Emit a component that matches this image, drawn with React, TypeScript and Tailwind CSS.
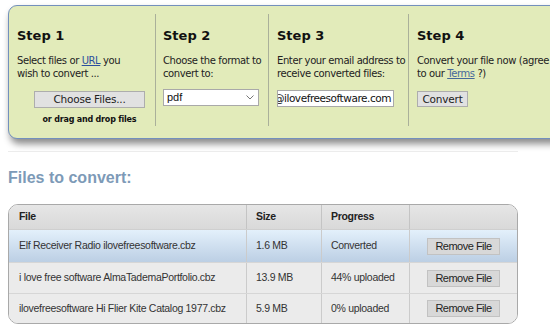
import React from 'react';

const panelFont = { fontFamily: '"DejaVu Sans", Verdana, sans-serif' };
const tableFont = { fontFamily: '"Liberation Sans", Arial, sans-serif' };

const rows = [
    { name: 'Elf Receiver Radio ilovefreesoftware.cbz', size: '1.6 MB', progress: 'Converted', active: true, h: 'h-[32px]' },
    { name: 'i love free software AlmaTademaPortfolio.cbz', size: '13.9 MB', progress: '44% uploaded', active: false, h: 'h-[31px]' },
    { name: 'ilovefreesoftware Hi Flier Kite Catalog 1977.cbz', size: '5.9 MB', progress: '0% uploaded', active: false, h: 'h-[30px]' },
];

const Heading: React.FC<{ children: React.ReactNode }> = ({ children }) => (
    <h3 className="text-[13px] leading-[16px] tracking-normal font-bold text-[#111]">{children}</h3>
);

export default function App() {
    return (
        <div className="w-[550px] h-[326px] overflow-hidden bg-white relative">
            {/* Steps panel */}
            <div
                className="ml-[8px] mt-[5px] w-[570px] h-[134px] rounded-[9px] border-[1.5px] border-[#7390bd] bg-[#e2ebba] shadow-[2px_5px_7px_rgba(0,0,0,0.45)] pl-[1px] pt-[8px]"
                style={panelFont}
            >
                <div className="flex h-[112px] text-[10px] leading-[13px] tracking-[-0.4px] text-[#222]">
                    {/* Step 1 */}
                    <div className="w-[145px] pl-[7px] pt-[14px] flex flex-col">
                        <Heading>Step 1</Heading>
                        <p className="mt-[10px] whitespace-nowrap">
                            Select files or <span className="text-[#2c4f9e] underline">URL</span> you
                            <br />wish to convert ...
                        </p>
                        <div className="ml-[17px] w-[111px] flex flex-col items-center">
                            <button className="mt-[11px] w-[111px] h-[17px] bg-[#e1e1e1] border border-[#adadad] text-[10.5px] leading-[15px] tracking-[-0.2px] text-[#222]">
                                Choose Files...
                            </button>
                            <div className="mt-[7px] text-[8px] leading-[10px] tracking-[-0.2px] font-bold text-[#111] whitespace-nowrap">or drag and drop files</div>
                        </div>
                    </div>
                    {/* Step 2 */}
                    <div className="w-[113px] border-l border-[#aab09a] pl-[7px] pt-[14px] flex flex-col">
                        <Heading>Step 2</Heading>
                        <p className="mt-[10px] whitespace-nowrap">
                            Choose the format to
                            <br />convert to:
                        </p>
                        <div className="mt-[9px] w-[96px] h-[17px] bg-white border border-[#a9a9a9] flex items-center justify-between pl-[3px] pr-[4px]">
                            <span className="text-[11px] leading-[13px] tracking-normal text-[#111]" style={tableFont}>pdf</span>
                            <svg width="8" height="5" viewBox="0 0 8 5" className="text-[#777]">
                                <path d="M0.5 0.5 L4 4 L7.5 0.5" fill="none" stroke="currentColor" strokeWidth="1" />
                            </svg>
                        </div>
                    </div>
                    {/* Step 3 */}
                    <div className="w-[140px] border-l border-[#aab09a] pl-[8px] pt-[14px] flex flex-col">
                        <Heading>Step 3</Heading>
                        <p className="mt-[10px] whitespace-nowrap">
                            Enter your email address to
                            <br />receive converted files:
                        </p>
                        <div className="mt-[10px] w-[117px] h-[17px] bg-white border border-[#a9a9a9] flex justify-end items-center overflow-hidden pr-[2px]">
                            <span className="whitespace-nowrap text-[10.5px] leading-[13px] tracking-[-0.45px] text-[#111]">n@ilovefreesoftware.com</span>
                        </div>
                    </div>
                    {/* Step 4 */}
                    <div className="flex-1 border-l border-[#aab09a] pl-[8px] pt-[14px] flex flex-col">
                        <Heading>Step 4</Heading>
                        <p className="mt-[10px] whitespace-nowrap">
                            Convert your file now (agree
                            <br />to our <span className="text-[#46689a] underline">Terms</span> ?)
                        </p>
                        <button className="mt-[11px] w-[51px] h-[16px] bg-[#e1e1e1] border border-[#adadad] text-[10.5px] leading-[14px] tracking-[-0.2px] text-[#222]">
                            Convert
                        </button>
                    </div>
                </div>
            </div>

            <div className="ml-[8px] mt-[12px] w-[510px] h-px bg-[#ececec]" />

            {/* Files to convert */}
            <div className="pl-[8px]" style={tableFont}>
                <h2 className="mt-[16px] text-[16px] leading-[20px] font-bold text-[#7d9ab7]">Files to convert:</h2>

                <div className="mt-[16px] w-[510px] rounded-[10px] border border-[#a9a9a9] overflow-hidden text-[10.5px] tracking-[-0.3px] text-[#333]">
                    <div className="grid grid-cols-[237px_75px_88px_1fr] h-[25px] bg-gradient-to-b from-[#e6e6e6] to-[#d9d9d9] border-b border-[#cfcfcf] font-bold text-[#222]">
                        <div className="pl-[10px] flex items-center">File</div>
                        <div className="pl-[9px] flex items-center border-l border-[#c4c4c4]">Size</div>
                        <div className="pl-[9px] flex items-center border-l border-[#c4c4c4]">Progress</div>
                        <div className="border-l border-[#c4c4c4]" />
                    </div>
                    {rows.map((r, i) => (
                        <div
                            key={i}
                            className={`grid grid-cols-[237px_75px_88px_1fr] ${r.h} ${i > 0 ? 'border-t border-[#d6d6d6]' : ''} ${r.active ? 'bg-gradient-to-b from-[#e3f0fb] to-[#bccfe4]' : 'bg-[#ebebeb]'}`}
                        >
                            <div className="pl-[10px] flex items-center whitespace-nowrap">{r.name}</div>
                            <div className="pl-[9px] flex items-center border-l border-[#cbcbcb]">{r.size}</div>
                            <div className="pl-[9px] flex items-center border-l border-[#cbcbcb]">{r.progress}</div>
                            <div className="flex items-center justify-center border-l border-[#cbcbcb]">
                                <button className="w-[73px] h-[17px] bg-[#d8d8d8] border border-[#c2c2c2] text-[11px] leading-[15px] tracking-[-0.5px] text-[#222]">
                                    Remove File
                                </button>
                            </div>
                        </div>
                    ))}
                </div>
            </div>
        </div>
    );
}
